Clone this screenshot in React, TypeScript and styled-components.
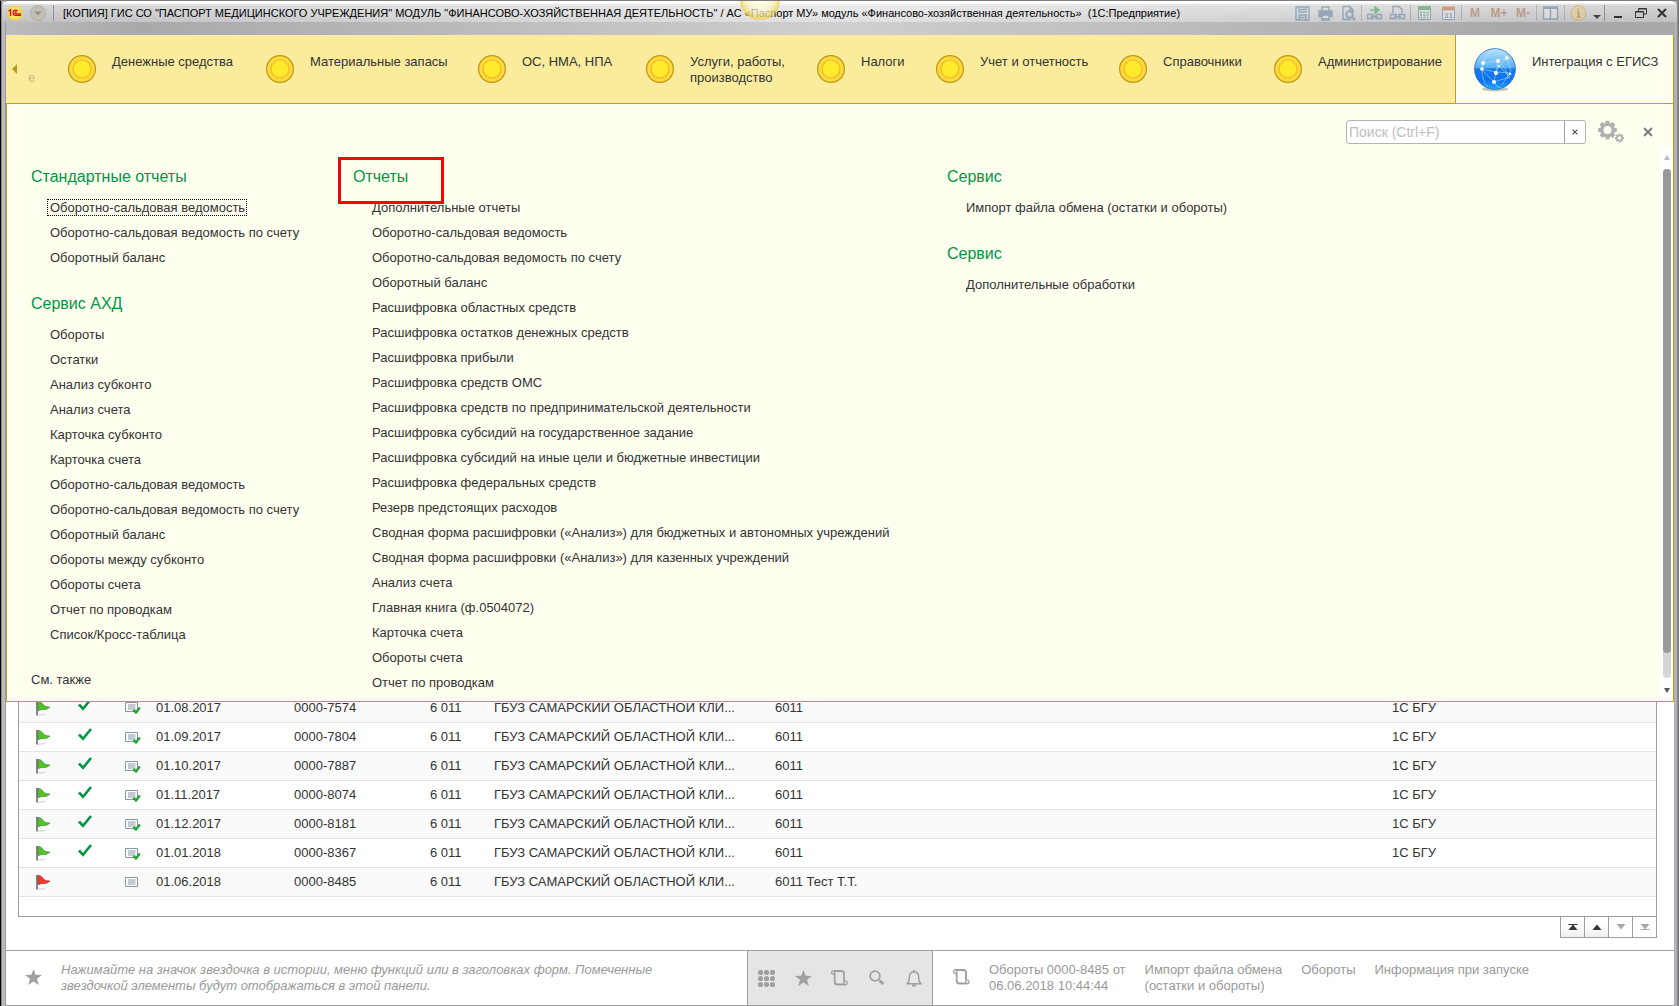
import React from "react";
import styled, { createGlobalStyle } from "styled-components";

const GlobalStyle = createGlobalStyle`
  *, *::before, *::after { box-sizing: border-box; }
  body {
    margin: 0;
    font-family: "Liberation Sans", Arial, sans-serif;
    font-size: 13px;
    line-height: 16px;
    color: #333;
    background: #77777a;
  }
  button { font: inherit; color: inherit; padding: 0; border: 0; background: none; }
  ul { list-style: none; margin: 0; padding: 0; }
  a { color: inherit; text-decoration: none; }
  svg { display: block; flex: none; }
`;

const Window = styled.div`
  position: relative;
  display: flex;
  flex-direction: column;
  height: 100vh;
  min-height: 960px;
  padding: 0 5px 0 6px;
  overflow: hidden;
  border-top: 1px solid #7e7c80;
  background: linear-gradient(90deg, #000 0 1px, #8a8a8c 1px 2px, #bdbabd 2px 5px, #9a9a9c 5px 6px, #a8abad 6px calc(100% - 4px), #c4c4c6 calc(100% - 3px), #77777a calc(100% - 1px));
`;

const TitleBar = styled.header`
  display: flex;
  align-items: center;
  flex: none;
  height: 21px;
  margin: 0 -3px 0 -4px;
  padding: 2px 5px 0 5px;
  border-radius: 6px 6px 0 0;
  background: linear-gradient(180deg, #fff 0 2px, rgba(255,255,255,0.45) 4px, rgba(255,255,255,0.15) 100%),
    linear-gradient(90deg, #b4b4b7, #dcdcdc 50%, #b4b4b7);
`;

const TitleShade = styled.div`
  flex: none;
  height: 13px;
  background: linear-gradient(90deg, #bcbcbe 0, #a8a9ab 8%, #cfcfcf 50%, #a8a9ab 90%);
`;

const Title = styled.h1`
  flex: 1;
  min-width: 0;
  margin: 0;
  padding-left: 8px;
  overflow: hidden;
  font-size: 11px;
  font-weight: 400;
  line-height: 16px;
  white-space: nowrap;
  color: #000;
`;

const TitleTools = styled.div<{ $faded?: boolean }>`
  display: flex;
  align-items: center;
  opacity: ${(p) => (p.$faded ? 0.5 : 1)};
`;

const TitleButton = styled.button<{ $width?: number }>`
  display: flex;
  align-items: center;
  justify-content: center;
  width: ${(p) => p.$width ?? 23}px;
  height: 18px;
  font-size: 12px;
  font-weight: 700;
  color: #a5653d;
`;

const TitleSeparator = styled.span`
  width: 1px;
  height: 16px;
  margin: 0 1px;
  background: #8f8f92;
`;

const Glow = styled.div`
  position: absolute;
  top: -21px;
  left: 740px;
  width: 40px;
  height: 40px;
  border-radius: 50%;
  background: radial-gradient(closest-side, rgba(255,255,230,0.85) 0 30%, rgba(248,240,180,0.7) 70%, rgba(242,205,70,0.8) 100%);
`;

const SectionBar = styled.nav`
  display: flex;
  flex: none;
  height: 69px;
  background: #fbec9d;
  border-bottom: 1px solid #bfa21c;
`;

const ScrollLeft = styled.button`
  display: flex;
  align-items: center;
  width: 46px;
  padding-left: 6px;
  gap: 11px;
  color: #c8b97b;
`;

const ScrolledLabel = styled.span`
  padding-top: 18px;
`;

const Section = styled.a<{ $width: number; $active?: boolean }>`
  display: flex;
  gap: 16px;
  width: ${(p) => p.$width}px;
  padding-left: ${(p) => (p.$active ? 18 : 16)}px;
  font-size: 13px;
  line-height: 16px;
  white-space: pre-line;
  ${(p) =>
    p.$active &&
    `flex: 1; background: #fffff0; border-left: 1px solid #bfa21c; border-right: 1px solid #bfa21c;`}
`;

const SectionIcon = styled.span<{ $active?: boolean }>`
  display: block;
  flex: none;
  padding-top: ${(p) => (p.$active ? 12 : 20)}px;
`;

const SectionLabel = styled.span`
  padding-top: 19px;
`;

const WorkArea = styled.main`
  position: relative;
  display: flex;
  flex-direction: column;
  flex: 1;
  min-height: 0;
  overflow: hidden;
  padding: 0 17px 12px 12px;
  background: #fff;
`;

const MenuPanel = styled.section`
  position: absolute;
  z-index: 1;
  top: 0;
  left: 0;
  right: 0;
  display: flex;
  flex-direction: column;
  background: #fffff0;
  border: 1px solid #bfa21c;
  border-top: 0;
`;

const MenuTools = styled.div`
  display: flex;
  align-items: center;
  justify-content: flex-end;
  height: 44px;
  padding: 12px 20px 0 0;
`;

const SearchBox = styled.div`
  display: flex;
  width: 240px;
  height: 24px;
  border: 1px solid #b3b3b3;
  border-radius: 3px;
  background: #fff;
`;

const SearchInput = styled.input`
  flex: 1;
  min-width: 0;
  padding: 0 2px;
  border: 0;
  outline: 0;
  background: none;
  font: 14px "Liberation Sans", Arial, sans-serif;
  color: #333;
  &::placeholder { color: #c0c0c0; opacity: 1; }
`;

const ClearButton = styled.button`
  display: flex;
  align-items: center;
  justify-content: center;
  width: 21px;
  border-left: 1px solid #a0a0a0;
`;

const GearButton = styled.button`
  margin: 0 18px 0 12px;
`;

const MenuBody = styled.div`
  display: flex;
`;

const MenuColumns = styled.div`
  display: flex;
  flex: 1;
  padding: 16px 0 6px 24px;
`;

const MenuColumn = styled.div<{ $width?: number }>`
  flex: ${(p) => (p.$width ? `0 0 ${p.$width}px` : "1")};
`;

const MenuGroup = styled.section`
  margin-bottom: 21px;
  &:last-child { margin-bottom: 0; }
`;

const GroupTitle = styled.h2`
  position: relative;
  margin: 0 0 6px;
  font-size: 16px;
  font-weight: 400;
  line-height: 25px;
  color: #009646;
`;

const Highlight = styled.span`
  position: absolute;
  z-index: 1;
  top: -7px;
  left: -15px;
  width: 106px;
  height: 47px;
  border: 3px solid #f00;
`;

const MenuItem = styled.li`
  display: flex;
  align-items: center;
  height: 25px;
  padding-left: 16px;
`;

const MenuLink = styled.a<{ $focused?: boolean }>`
  padding: 0 1px 0 2px;
  border: 1px dotted ${(p) => (p.$focused ? "#000" : "transparent")};
  line-height: 15px;
  white-space: nowrap;
`;

const SeeAlso = styled.a`
  display: block;
  padding: 4px 0;
`;

const ScrollTrack = styled.div`
  display: flex;
  flex-direction: column;
  align-items: center;
  width: 13px;
  padding: 7px 1px 8px;
  background: #fff;
`;

const ScrollRail = styled.div`
  display: flex;
  flex: 1;
  width: 8px;
  margin: 9px 0 10px;
  border-radius: 4px;
  background: #d5d5d5;
`;

const ScrollThumb = styled.div`
  width: 8px;
  height: 95%;
  border-radius: 4px;
  background: #999;
`;

const Journal = styled.div`
  display: flex;
  flex-direction: column;
  justify-content: flex-end;
  flex: 1;
  min-height: 0;
  padding-bottom: 19px;
  overflow: hidden;
  border: 1px solid #9e9e9e;
`;

const JournalTable = styled.table`
  width: 100%;
  table-layout: fixed;
  border-collapse: collapse;
  font-size: 13px;
`;

const Col = styled.col<{ $width?: number }>`
  width: ${(p) => (p.$width ? `${p.$width}px` : "auto")};
`;

const Row = styled.tr`
  height: 29px;
  border-bottom: 1px solid #e3e3e3;
  &:nth-child(odd) { background: #fafafa; }
`;

const Cell = styled.td`
  padding: 0 8px;
  white-space: nowrap;
`;

const MarkCell = styled(Cell)`
  padding: 0 8px 6px;
`;

const FlagCell = styled(Cell)`
  padding: 0 8px 0 17px;
`;

const Pager = styled.div`
  display: flex;
  align-self: flex-end;
  flex: none;
  height: 21px;
  border: solid #9e9e9e;
  border-width: 0 1px 1px 0;
`;

const PagerButton = styled.button`
  display: flex;
  align-items: center;
  justify-content: center;
  width: 24px;
  border-left: 1px solid #9e9e9e;
  color: #333;
  background: linear-gradient(#fff 40%, #efefef);
  &:disabled { color: #aaa; background: #fff; }
`;

const StatusBar = styled.footer`
  display: grid;
  grid-template-columns: minmax(0, 1fr) 186px minmax(0, 1fr);
  flex: none;
  height: 56px;
  border: solid #9e9e9e;
  border-width: 1px 0;
  background: #fff;
  color: #999;
`;

const Favorites = styled.div`
  display: flex;
  gap: 19px;
  padding: 11px 60px 0 19px;
  font-style: italic;
`;

const FavoritesHint = styled.p`
  margin: 0;
  max-width: 620px;
`;

const BarIcon = styled.span`
  padding-top: 7px;
`;

const QuickButtons = styled.div`
  display: flex;
  border: solid #9e9e9e;
  border-width: 0 1px;
  background: #e5e5e5;
`;

const QuickButton = styled.button`
  display: flex;
  align-items: center;
  justify-content: center;
  flex: 1;
  color: #a0a0a0;
`;

const History = styled.div`
  display: flex;
  padding: 11px 0 0 20px;
`;

const HistoryIcon = styled.span`
  width: 36px;
  padding-top: 7px;
`;

const HistoryLink = styled.a`
  margin-right: 19px;
  white-space: pre;
`;

const sections: { label: string; width: number }[] = [
  { label: "Денежные средства", width: 198 },
  { label: "Материальные запасы", width: 212 },
  { label: "ОС, НМА, НПА", width: 168 },
  { label: "Услуги, работы,\nпроизводство", width: 171 },
  { label: "Налоги", width: 119 },
  { label: "Учет и отчетность", width: 183 },
  { label: "Справочники", width: 155 },
  { label: "Администрирование", width: 197 },
];

type Group = { title: string; items: string[]; marked?: boolean; focused?: number };

const columns: { width?: number; seeAlso?: boolean; groups: Group[] }[] = [
  {
    width: 322,
    seeAlso: true,
    groups: [
      {
        title: "Стандартные отчеты",
        focused: 0,
        items: ["Оборотно-сальдовая ведомость", "Оборотно-сальдовая ведомость по счету", "Оборотный баланс"],
      },
      {
        title: "Сервис АХД",
        items: [
          "Обороты", "Остатки", "Анализ субконто", "Анализ счета", "Карточка субконто", "Карточка счета",
          "Оборотно-сальдовая ведомость", "Оборотно-сальдовая ведомость по счету", "Оборотный баланс",
          "Обороты между субконто", "Обороты счета", "Отчет по проводкам", "Список/Кросс-таблица",
        ],
      },
    ],
  },
  {
    width: 594,
    groups: [
      {
        title: "Отчеты",
        marked: true,
        items: [
          "Дополнительные отчеты", "Оборотно-сальдовая ведомость", "Оборотно-сальдовая ведомость по счету",
          "Оборотный баланс", "Расшифровка областных средств", "Расшифровка остатков денежных средств",
          "Расшифровка прибыли", "Расшифровка средств ОМС", "Расшифровка средств по предпринимательской деятельности",
          "Расшифровка субсидий на государственное задание", "Расшифровка субсидий на иные цели и бюджетные инвестиции",
          "Расшифровка федеральных средств", "Резерв предстоящих расходов",
          "Сводная форма расшифровки («Анализ») для бюджетных и автономных учреждений",
          "Сводная форма расшифровки («Анализ») для казенных учреждений", "Анализ счета",
          "Главная книга (ф.0504072)", "Карточка счета", "Обороты счета", "Отчет по проводкам",
        ],
      },
    ],
  },
  {
    groups: [
      { title: "Сервис", items: ["Импорт файла обмена (остатки и обороты)"] },
      { title: "Сервис", items: ["Дополнительные обработки"] },
    ],
  },
];

const rows = [
  { date: "01.08.2017", num: "0000-7574", note: "6011", done: true },
  { date: "01.09.2017", num: "0000-7804", note: "6011", done: true },
  { date: "01.10.2017", num: "0000-7887", note: "6011", done: true },
  { date: "01.11.2017", num: "0000-8074", note: "6011", done: true },
  { date: "01.12.2017", num: "0000-8181", note: "6011", done: true },
  { date: "01.01.2018", num: "0000-8367", note: "6011", done: true },
  { date: "01.06.2018", num: "0000-8485", note: "6011 Тест Т.Т.", done: false },
];

const CoinIcon = () => (
  <svg width="28" height="28" viewBox="0 0 28 28">
    <circle cx="14" cy="14" r="13.4" fill="#ffd83d" stroke="#b99a12" strokeWidth="1.2" />
    <circle cx="14" cy="14" r="9" fill="#ffea2b" stroke="#edb92a" strokeWidth="1.2" />
  </svg>
);

const GlobeIcon = () => (
  <svg width="42" height="46" viewBox="0 0 42 46">
    <defs>
      <linearGradient id="globe" x1="0" y1="0" x2="0" y2="1">
        <stop offset="0" stopColor="#b5e2fb" />
        <stop offset="0.46" stopColor="#58b2f5" />
        <stop offset="0.5" stopColor="#1779e6" />
        <stop offset="0.8" stopColor="#0c74f2" />
        <stop offset="1" stopColor="#22b0fa" />
      </linearGradient>
    </defs>
    <ellipse cx="21" cy="42" rx="13" ry="2.5" fill="#aaa" opacity="0.7" />
    <circle cx="21" cy="22" r="20.4" fill="url(#globe)" stroke="#2368c2" strokeWidth="0.8" />
    <g fill="none" stroke="#d3efff" strokeWidth="0.6" opacity="0.75">
      <path d="M9 16L24 14L33 11L37 24L28 38M9 16L7 22L22 25L36 26M7 22L20 35L22 25L24 14M20 35L36 30L25 19L22 25M9 16Q12 5 22 2M33 11Q28 5 22 2M8 22Q8 34 14 40M20 35Q22 40 27 41M24 14Q34 22 34 32M25 19L33 11" />
    </g>
    <g fill="#fff">
      <circle cx="9" cy="16" r="2" /><circle cx="24" cy="14" r="2" /><circle cx="33" cy="11" r="1.8" />
      <circle cx="8" cy="22" r="1.8" /><circle cx="22" cy="26" r="2.1" /><circle cx="20" cy="35" r="2" />
      <circle cx="36" cy="27" r="1.3" /><circle cx="25" cy="19" r="1.1" />
    </g>
  </svg>
);

const gearPath = (cx: number, cy: number, r: number, hole: number) => {
  const pts: string[] = [];
  for (let i = 0; i < 8; i++) {
    const a = (i * Math.PI) / 4;
    [[-0.3, 0.76], [-0.2, 1], [0.2, 1], [0.3, 0.76]].forEach(([d, k]) =>
      pts.push(`${(cx + Math.cos(a + d) * r * k).toFixed(2)} ${(cy + Math.sin(a + d) * r * k).toFixed(2)}`)
    );
  }
  return `M${pts.join("L")}ZM${cx + hole} ${cy}a${hole} ${hole} 0 1 0 ${-2 * hole} 0a${hole} ${hole} 0 1 0 ${2 * hole} 0Z`;
};

const GearsIcon = () => (
  <svg width="27" height="24" viewBox="0 0 27 24" fill="#b0b0b0" fillRule="evenodd">
    <path d={gearPath(9.5, 10, 9.5, 4)} />
    <path d={gearPath(21.5, 18, 4.6, 1.8)} />
  </svg>
);

const CrossIcon = ({ size, color, weight }: { size: number; color: string; weight: number }) => (
  <svg width={size} height={size} viewBox="0 0 10 10" stroke={color} strokeWidth={weight}>
    <path d="M1 1L9 9M9 1L1 9" />
  </svg>
);

const FlagIcon = ({ color, dark }: { color: string; dark: string }) => (
  <svg width="15" height="16" viewBox="0 0 15 16">
    <path d="M2 14.5L11 13.5L8 15.5L2 16Z" fill="#ddd" />
    <path d="M1.8 1.2C5 1.5 6 3 8 5.5C10 7 12 6.5 14 7.2C12 8 11 10 8 9.5C5 9 4 10.5 2 10.5Z" fill={color} stroke={dark} strokeWidth="0.6" />
    <path d="M1 1V15.5" stroke="#555" strokeWidth="1.4" />
  </svg>
);

const CheckIcon = () => (
  <svg width="14" height="13" viewBox="0 0 14 13" fill="none" stroke="#009646" strokeWidth="2.6">
    <path d="M1 6.5L5 10.8L13 1" />
  </svg>
);

const DocIcon = ({ done }: { done: boolean }) => (
  <svg width="16" height="13" viewBox="0 0 16 13" fill="none">
    <path d="M0.5 1.5H12.5V10.5H0.5Z" fill="#fff" stroke="#8596a5" />
    <path d="M3 4H10.5M3 6H10.5M3 8H10.5" stroke="#8596a5" />
    {done && <path d="M8.4 9L11 11.4L14.8 6.6" stroke="#22a232" strokeWidth="2.4" />}
  </svg>
);

const StarIcon = () => (
  <svg width="17" height="16" viewBox="0 0 17 16" fill="#a0a0a0">
    <path d="M8.5 0L10.6 5.8L17 6L12 9.8L13.8 16L8.5 12.4L3.2 16L5 9.8L0 6L6.4 5.8Z" />
  </svg>
);

const DotsIcon = () => (
  <svg width="17" height="17" viewBox="0 0 17 17" fill="#a0a0a0">
    {[2.5, 8.5, 14.5].map((y) => [2.5, 8.5, 14.5].map((x) => <circle key={`${x}-${y}`} cx={x} cy={y} r="2.6" />))}
  </svg>
);

const ScrollIcon = () => (
  <svg width="17" height="16" viewBox="0 0 17 16" fill="none" stroke="#a0a0a0" strokeWidth="1.3">
    <path d="M3.7 4V11.5Q3.7 14.5 6.5 14.5H14M2.5 1H10.5Q13 1 13 3.5V11" strokeWidth="1.8" />
    <circle cx="2.3" cy="2.6" r="1.7" />
    <circle cx="14.4" cy="12.9" r="1.8" />
  </svg>
);

const SearchIcon = () => (
  <svg width="16" height="16" viewBox="0 0 16 16" fill="none" stroke="#a0a0a0">
    <circle cx="6" cy="6" r="4.9" strokeWidth="1.7" />
    <path d="M9.5 9.5L11 11" strokeWidth="1.5" />
    <path d="M10.8 10.8L14.4 14" strokeWidth="3" />
  </svg>
);

const BellIcon = () => (
  <svg width="16" height="17" viewBox="0 0 16 17" fill="none" stroke="#a0a0a0" strokeWidth="1.5">
    <path d="M1 13.8Q3.3 12 3.3 8.5V7Q3.3 2 8 2Q12.7 2 12.7 7V8.5Q12.7 12 15 13.8Z" />
    <path d="M8 0V2M6 15.5H10" strokeWidth="1.8" />
  </svg>
);

const LogoIcon = () => (
  <svg width="16" height="16" viewBox="0 0 16 16">
    <defs>
      <radialGradient id="logo"><stop offset="0.3" stopColor="#fff27a" /><stop offset="1" stopColor="#f5cf3f" /></radialGradient>
    </defs>
    <circle cx="8" cy="8" r="7.6" fill="url(#logo)" />
    <path d="M1.5 6L3.5 4.8V11M10.5 6Q9.5 4.8 7.8 5.2Q6 6 6 8Q6.2 10.4 8.5 10.4H14M10 7.3Q8.3 6.3 8 8Q8 8.8 9 8.8H14" fill="none" stroke="#e30613" strokeWidth="1.3" />
  </svg>
);

const MenuCircleIcon = () => (
  <svg width="16" height="16" viewBox="0 0 16 16">
    <circle cx="8" cy="8" r="7.5" fill="#c4bfb5" stroke="#b4afa4" />
    <path d="M4 6.5H12L8 10.5Z" fill="#99958d" />
  </svg>
);

const ToolIcon = ({ kind }: { kind: string }) => (
  <svg width="17" height="16" viewBox="0 0 17 16" fill="none" stroke="#55789a" strokeWidth="1.4">
    {kind === "save" && <path d="M2 2H15V15H2ZM5 2V7H12V2M5 15V10H12V15M6 12.5H11M6 4.5H11" />}
    {kind === "print" && <><path d="M5 6V2H12V6M5 11V15H12V11" /><path d="M2 6H15V11.5H2Z" fill="#55789a" /><path d="M5 10H12V14H5Z" fill="#dfe6ea" /></>}
    {kind === "preview" && <><path d="M11 14.5H3V1.5H10L13 5V8M10 2V5H13" /><circle cx="9.5" cy="9.5" r="3.2" strokeWidth="2" /><path d="M12 12L15 15" strokeWidth="2.4" /></>}
    {kind === "link" && <><path d="M1.5 9.5H7V13.5H1.5ZM10 9.5H15.5V13.5H10ZM5 11.5H12" /><path d="M4 5H9V2L13 5L9 8V5" stroke="#2f9c3c" fill="#2f9c3c" strokeWidth="1.4" /></>}
    {kind === "linkdoc" && <><path d="M4 8V1.5H10L13 4.5V8" /><path d="M1.5 9.5H7V13.5H1.5ZM10 9.5H15.5V13.5H10ZM5 11.5H12" /></>}
    {kind === "calc" && <><path d="M2.5 1.5H14.5V14.5H2.5Z" fill="#e5e9e6" strokeWidth="1" /><path d="M2 3H15" stroke="#3d9452" strokeWidth="4" /><path d="M4 7.5H13M4 10H13M4 12.5H13" strokeDasharray="2 1.3" stroke="#3d9452" /></>}
    {kind === "calendar" && (
      <>
        <path d="M2.5 2.5H14.5V14.5H2.5Z" fill="#eee" strokeWidth="1" />
        <path d="M2 3.5H15" stroke="#bd6337" strokeWidth="4" />
        <text x="4" y="13" fontSize="8" fill="#55789a" stroke="none">31</text>
      </>
    )}
    {kind === "panes" && <><path d="M1.5 2H15.5V14H1.5ZM8.5 3V14" fill="#e8e8e8" /><path d="M1 3H16" strokeWidth="2" /></>}
    {kind === "info" && <><circle cx="8.5" cy="8" r="7.3" fill="#f0cd7c" stroke="#c7993f" strokeWidth="1" /><path d="M8.5 3.5V5.2M7 7H8.5V12M6.5 12H10.5" stroke="#a3782c" strokeWidth="1.7" /></>}
  </svg>
);

const Triangle = ({ down, bar }: { down?: boolean; bar?: boolean }) => (
  <svg width="10" height="8" viewBox="0 0 10 8" fill="currentColor">
    <g transform={down ? "rotate(180 5 4)" : undefined}>
      <path d="M0.5 7L5 1.5L9.5 7Z" />
      {bar && <path d="M0.5 1H9.5V2H0.5Z" />}
    </g>
  </svg>
);

export default function App() {
  return (
    <>
      <GlobalStyle />
      <Window>
        <TitleBar>
          <TitleTools>
            <LogoIcon />
            <TitleButton aria-label="Главное меню" $width={29}><MenuCircleIcon /></TitleButton>
            <TitleSeparator />
          </TitleTools>
          <Title>
            [КОПИЯ] ГИС СО "ПАСПОРТ МЕДИЦИНСКОГО УЧРЕЖДЕНИЯ" МОДУЛЬ "ФИНАНСОВО-ХОЗЯЙСТВЕННАЯ ДЕЯТЕЛЬНОСТЬ" / АС «Паспорт МУ» модуль «Финансово-хозяйственная деятельность»&nbsp; (1С:Предприятие)
          </Title>
          <TitleTools $faded>
            <TitleButton aria-label="Сохранить"><ToolIcon kind="save" /></TitleButton>
            <TitleButton aria-label="Печать"><ToolIcon kind="print" /></TitleButton>
            <TitleButton aria-label="Просмотр"><ToolIcon kind="preview" /></TitleButton>
            <TitleSeparator />
            <TitleButton aria-label="Получить ссылку"><ToolIcon kind="link" /></TitleButton>
            <TitleButton aria-label="Перейти по ссылке"><ToolIcon kind="linkdoc" /></TitleButton>
            <TitleSeparator />
            <TitleButton aria-label="Калькулятор" $width={24}><ToolIcon kind="calc" /></TitleButton>
            <TitleButton aria-label="Календарь" $width={24}><ToolIcon kind="calendar" /></TitleButton>
            <TitleSeparator />
            <TitleButton $width={24}>M</TitleButton>
            <TitleButton $width={24}>M+</TitleButton>
            <TitleButton $width={24}>M-</TitleButton>
            <TitleSeparator />
            <TitleButton aria-label="Окна" $width={25}><ToolIcon kind="panes" /></TitleButton>
            <TitleSeparator />
            <TitleButton aria-label="Справка" $width={25}><ToolIcon kind="info" /></TitleButton>
          </TitleTools>
          <TitleTools>
            <TitleButton aria-label="Ещё" $width={12}>
              <svg width="8" height="14" viewBox="0 0 8 14"><path d="M0 9H8L4 13Z" fill="#444" /></svg>
            </TitleButton>
            <TitleSeparator />
            <TitleButton aria-label="Свернуть">
              <svg width="8" height="12" viewBox="0 0 8 12"><path d="M0 9H8V11H0Z" fill="#333" /></svg>
            </TitleButton>
            <TitleButton aria-label="Восстановить">
              <svg width="12" height="10" viewBox="0 0 12 10" fill="none" stroke="#333"><path d="M3.5 3V0.5H11.5V6H9M3 1H12M0.5 3.5H8.5V9.5H0.5ZM0 4H9" /></svg>
            </TitleButton>
            <TitleButton aria-label="Закрыть" $width={20}><CrossIcon size={10} color="#333" weight={2} /></TitleButton>
          </TitleTools>
        </TitleBar>
        <TitleShade />
        <Glow />

        <SectionBar>
          <ScrollLeft aria-label="Прокрутить разделы влево">
            <svg width="5" height="10" viewBox="0 0 5 10"><path d="M5 0V10L0 5Z" fill="#b99c17" /></svg>
            <ScrolledLabel>е</ScrolledLabel>
          </ScrollLeft>
          {sections.map((s) => (
            <Section key={s.label} href="#" $width={s.width}>
              <SectionIcon><CoinIcon /></SectionIcon>
              <SectionLabel>{s.label}</SectionLabel>
            </Section>
          ))}
          <Section href="#" $width={218} $active>
            <SectionIcon $active><GlobeIcon /></SectionIcon>
            <SectionLabel>Интеграция с ЕГИСЗ</SectionLabel>
          </Section>
        </SectionBar>

        <WorkArea>
          <MenuPanel>
            <MenuTools>
              <SearchBox>
                <SearchInput type="text" aria-label="Поиск" placeholder="Поиск (Ctrl+F)" />
                <ClearButton aria-label="Очистить"><CrossIcon size={6} color="#555" weight={2} /></ClearButton>
              </SearchBox>
              <GearButton aria-label="Настройки"><GearsIcon /></GearButton>
              <button aria-label="Закрыть меню"><CrossIcon size={10} color="#777" weight={1.8} /></button>
            </MenuTools>
            <MenuBody>
              <MenuColumns>
                {columns.map((c, ci) => (
                  <MenuColumn key={ci} $width={c.width}>
                    {c.groups.map((g, gi) => (
                      <MenuGroup key={gi}>
                        <GroupTitle>
                          {g.title}
                          {g.marked && <Highlight />}
                        </GroupTitle>
                        <ul>
                          {g.items.map((item, i) => (
                            <MenuItem key={i}>
                              <MenuLink href="#" $focused={g.focused === i}>{item}</MenuLink>
                            </MenuItem>
                          ))}
                        </ul>
                      </MenuGroup>
                    ))}
                    {c.seeAlso && <SeeAlso href="#">См. также</SeeAlso>}
                  </MenuColumn>
                ))}
              </MenuColumns>
              <ScrollTrack>
                <svg width="6" height="5" viewBox="0 0 6 5"><path d="M0 5L3 0L6 5Z" fill="#bbb" /></svg>
                <ScrollRail><ScrollThumb /></ScrollRail>
                <svg width="6" height="5" viewBox="0 0 6 5"><path d="M0 0L3 5L6 0Z" fill="#555" /></svg>
              </ScrollTrack>
            </MenuBody>
          </MenuPanel>

          <Journal>
            <JournalTable>
              <colgroup>
                <Col $width={51} /><Col $width={47} /><Col $width={31} /><Col $width={138} /><Col $width={136} />
                <Col $width={64} /><Col $width={281} /><Col /><Col $width={272} />
              </colgroup>
              <tbody>
                {rows.map((r) => (
                  <Row key={r.num}>
                    <FlagCell>{r.done ? <FlagIcon color="#52c12a" dark="#3a8a22" /> : <FlagIcon color="#ee3b2a" dark="#b32a20" />}</FlagCell>
                    <MarkCell>{r.done && <CheckIcon />}</MarkCell>
                    <Cell><DocIcon done={r.done} /></Cell>
                    <Cell>{r.date}</Cell>
                    <Cell>{r.num}</Cell>
                    <Cell>6 011</Cell>
                    <Cell>ГБУЗ САМАРСКИЙ ОБЛАСТНОЙ КЛИ...</Cell>
                    <Cell>{r.note}</Cell>
                    <Cell>{r.done && "1С БГУ"}</Cell>
                  </Row>
                ))}
              </tbody>
            </JournalTable>
          </Journal>
          <Pager>
            <PagerButton aria-label="В начало"><Triangle bar /></PagerButton>
            <PagerButton aria-label="Вверх"><Triangle /></PagerButton>
            <PagerButton aria-label="Вниз" disabled><Triangle down /></PagerButton>
            <PagerButton aria-label="В конец" disabled><Triangle down bar /></PagerButton>
          </Pager>
        </WorkArea>

        <StatusBar>
          <Favorites>
            <BarIcon><StarIcon /></BarIcon>
            <FavoritesHint>
              Нажимайте на значок звездочка в истории, меню функций или в заголовках форм. Помеченные звездочкой элементы будут отображаться в этой панели.
            </FavoritesHint>
          </Favorites>
          <QuickButtons>
            <QuickButton aria-label="Меню функций"><DotsIcon /></QuickButton>
            <QuickButton aria-label="Избранное"><StarIcon /></QuickButton>
            <QuickButton aria-label="История"><ScrollIcon /></QuickButton>
            <QuickButton aria-label="Поиск"><SearchIcon /></QuickButton>
            <QuickButton aria-label="Оповещения"><BellIcon /></QuickButton>
          </QuickButtons>
          <History>
            <HistoryIcon><ScrollIcon /></HistoryIcon>
            <HistoryLink href="#">{"Обороты 0000-8485 от\n06.06.2018 10:44:44"}</HistoryLink>
            <HistoryLink href="#">{"Импорт файла обмена\n(остатки и обороты)"}</HistoryLink>
            <HistoryLink href="#">Обороты</HistoryLink>
            <HistoryLink href="#">Информация при запуске</HistoryLink>
          </History>
        </StatusBar>
      </Window>
    </>
  );
}
